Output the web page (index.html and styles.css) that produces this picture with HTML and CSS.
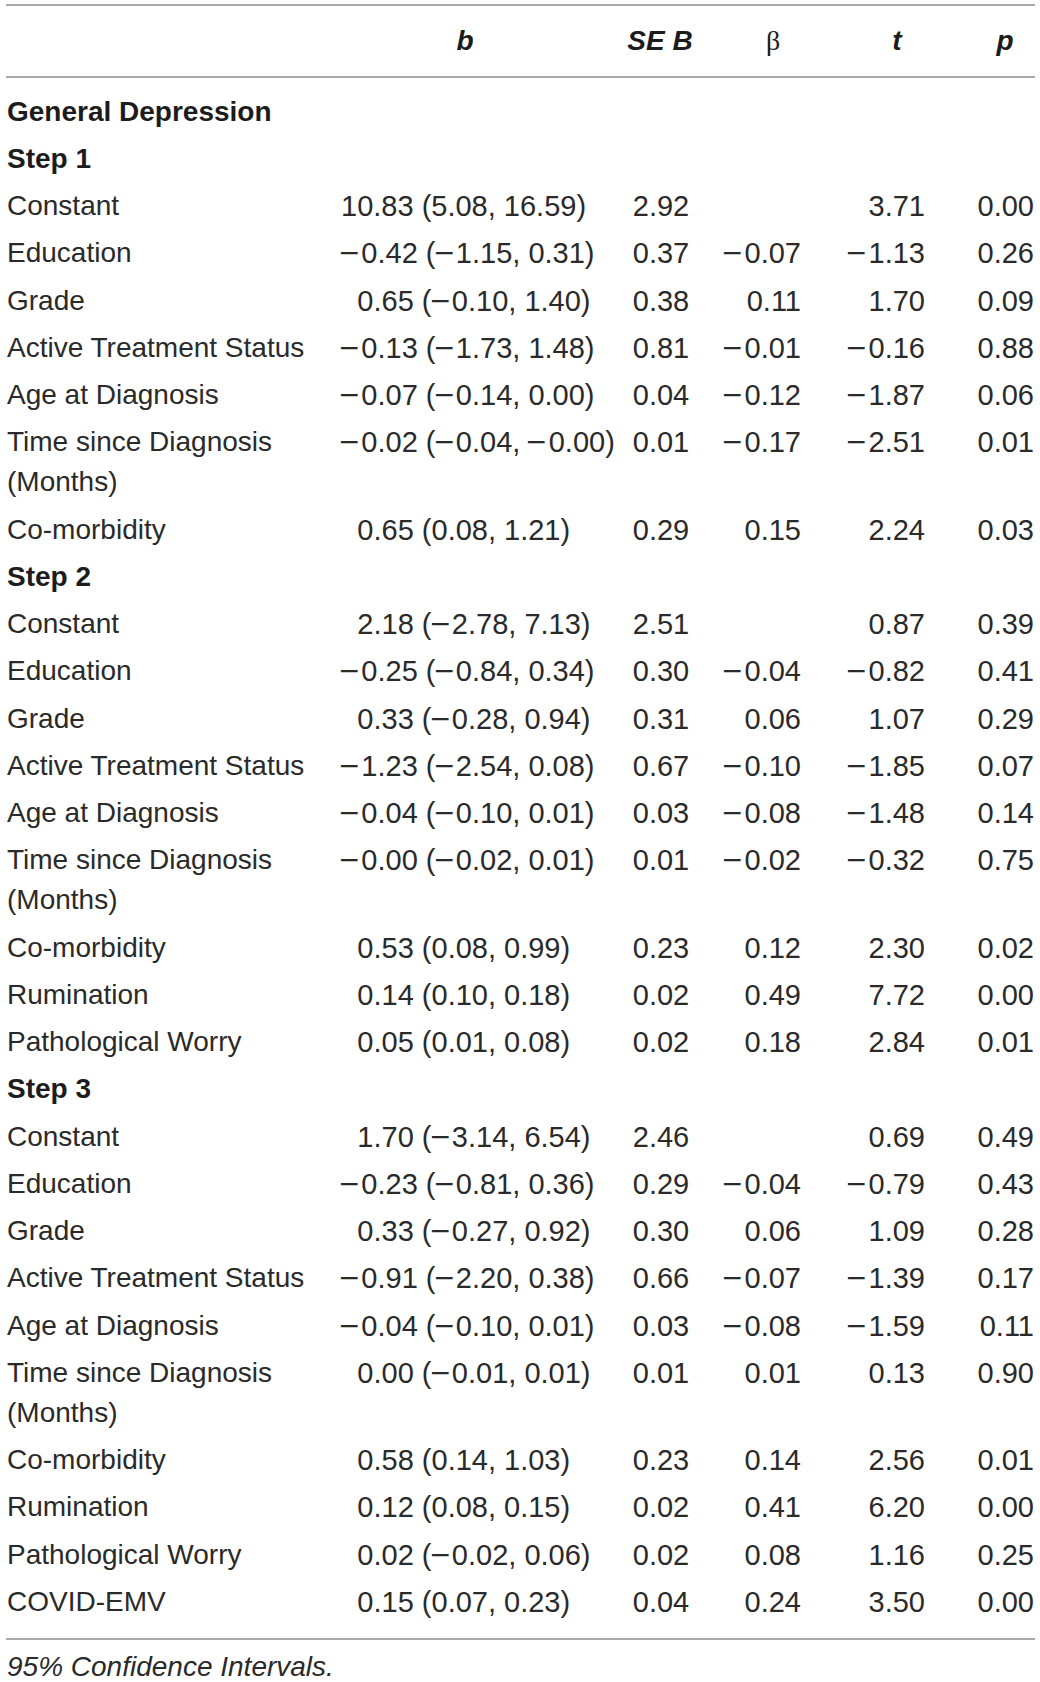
FILE: index.html
```html
<!DOCTYPE html>
<html lang="en">
<head>
<meta charset="utf-8">
<title>Hierarchical regression – General Depression</title>
<link rel="stylesheet" href="styles.css">
</head>
<body>
<div class="wrap">
<table class="reg">
  <colgroup>
    <col class="w-lab"><col class="w-b"><col class="w-se"><col class="w-beta"><col class="w-t"><col class="w-p">
  </colgroup>
  <thead>
    <tr>
      <th class="lab"></th>
      <th class="hb"><i>b</i></th>
      <th class="hse"><i>SE B</i></th>
      <th class="hbeta">β</th>
      <th class="ht"><i>t</i></th>
      <th class="hp"><i>p</i></th>
    </tr>
  </thead>
  <tbody>
    <tr class="first"><td class="sec" colspan="6">General Depression</td></tr>
    <tr><td class="sec" colspan="6">Step 1</td></tr>
    <tr><td class="lab">Constant</td><td class="b">10.83 (5.08, 16.59)</td><td class="se">2.92</td><td class="beta"></td><td class="t">3.71</td><td class="p">0.00</td></tr>
    <tr><td class="lab">Education</td><td class="b"><span class="m">−</span>0.42 (<span class="m">−</span>1.15, 0.31)</td><td class="se">0.37</td><td class="beta"><span class="m">−</span>0.07</td><td class="t"><span class="m">−</span>1.13</td><td class="p">0.26</td></tr>
    <tr><td class="lab">Grade</td><td class="b"><span class="ph">−</span>0.65 (<span class="m">−</span>0.10, 1.40)</td><td class="se">0.38</td><td class="beta">0.11</td><td class="t">1.70</td><td class="p">0.09</td></tr>
    <tr><td class="lab">Active Treatment Status</td><td class="b"><span class="m">−</span>0.13 (<span class="m">−</span>1.73, 1.48)</td><td class="se">0.81</td><td class="beta"><span class="m">−</span>0.01</td><td class="t"><span class="m">−</span>0.16</td><td class="p">0.88</td></tr>
    <tr><td class="lab">Age at Diagnosis</td><td class="b"><span class="m">−</span>0.07 (<span class="m">−</span>0.14, 0.00)</td><td class="se">0.04</td><td class="beta"><span class="m">−</span>0.12</td><td class="t"><span class="m">−</span>1.87</td><td class="p">0.06</td></tr>
    <tr><td class="lab">Time since Diagnosis (Months)</td><td class="b"><span class="m">−</span>0.02 (<span class="m">−</span>0.04, <span class="m">−</span>0.00)</td><td class="se">0.01</td><td class="beta"><span class="m">−</span>0.17</td><td class="t"><span class="m">−</span>2.51</td><td class="p">0.01</td></tr>
    <tr><td class="lab">Co-morbidity</td><td class="b"><span class="ph">−</span>0.65 (0.08, 1.21)</td><td class="se">0.29</td><td class="beta">0.15</td><td class="t">2.24</td><td class="p">0.03</td></tr>
    <tr><td class="sec" colspan="6">Step 2</td></tr>
    <tr><td class="lab">Constant</td><td class="b"><span class="ph">−</span>2.18 (<span class="m">−</span>2.78, 7.13)</td><td class="se">2.51</td><td class="beta"></td><td class="t">0.87</td><td class="p">0.39</td></tr>
    <tr><td class="lab">Education</td><td class="b"><span class="m">−</span>0.25 (<span class="m">−</span>0.84, 0.34)</td><td class="se">0.30</td><td class="beta"><span class="m">−</span>0.04</td><td class="t"><span class="m">−</span>0.82</td><td class="p">0.41</td></tr>
    <tr><td class="lab">Grade</td><td class="b"><span class="ph">−</span>0.33 (<span class="m">−</span>0.28, 0.94)</td><td class="se">0.31</td><td class="beta">0.06</td><td class="t">1.07</td><td class="p">0.29</td></tr>
    <tr><td class="lab">Active Treatment Status</td><td class="b"><span class="m">−</span>1.23 (<span class="m">−</span>2.54, 0.08)</td><td class="se">0.67</td><td class="beta"><span class="m">−</span>0.10</td><td class="t"><span class="m">−</span>1.85</td><td class="p">0.07</td></tr>
    <tr><td class="lab">Age at Diagnosis</td><td class="b"><span class="m">−</span>0.04 (<span class="m">−</span>0.10, 0.01)</td><td class="se">0.03</td><td class="beta"><span class="m">−</span>0.08</td><td class="t"><span class="m">−</span>1.48</td><td class="p">0.14</td></tr>
    <tr><td class="lab">Time since Diagnosis (Months)</td><td class="b"><span class="m">−</span>0.00 (<span class="m">−</span>0.02, 0.01)</td><td class="se">0.01</td><td class="beta"><span class="m">−</span>0.02</td><td class="t"><span class="m">−</span>0.32</td><td class="p">0.75</td></tr>
    <tr><td class="lab">Co-morbidity</td><td class="b"><span class="ph">−</span>0.53 (0.08, 0.99)</td><td class="se">0.23</td><td class="beta">0.12</td><td class="t">2.30</td><td class="p">0.02</td></tr>
    <tr><td class="lab">Rumination</td><td class="b"><span class="ph">−</span>0.14 (0.10, 0.18)</td><td class="se">0.02</td><td class="beta">0.49</td><td class="t">7.72</td><td class="p">0.00</td></tr>
    <tr><td class="lab">Pathological Worry</td><td class="b"><span class="ph">−</span>0.05 (0.01, 0.08)</td><td class="se">0.02</td><td class="beta">0.18</td><td class="t">2.84</td><td class="p">0.01</td></tr>
    <tr><td class="sec" colspan="6">Step 3</td></tr>
    <tr><td class="lab">Constant</td><td class="b"><span class="ph">−</span>1.70 (<span class="m">−</span>3.14, 6.54)</td><td class="se">2.46</td><td class="beta"></td><td class="t">0.69</td><td class="p">0.49</td></tr>
    <tr><td class="lab">Education</td><td class="b"><span class="m">−</span>0.23 (<span class="m">−</span>0.81, 0.36)</td><td class="se">0.29</td><td class="beta"><span class="m">−</span>0.04</td><td class="t"><span class="m">−</span>0.79</td><td class="p">0.43</td></tr>
    <tr><td class="lab">Grade</td><td class="b"><span class="ph">−</span>0.33 (<span class="m">−</span>0.27, 0.92)</td><td class="se">0.30</td><td class="beta">0.06</td><td class="t">1.09</td><td class="p">0.28</td></tr>
    <tr><td class="lab">Active Treatment Status</td><td class="b"><span class="m">−</span>0.91 (<span class="m">−</span>2.20, 0.38)</td><td class="se">0.66</td><td class="beta"><span class="m">−</span>0.07</td><td class="t"><span class="m">−</span>1.39</td><td class="p">0.17</td></tr>
    <tr><td class="lab">Age at Diagnosis</td><td class="b"><span class="m">−</span>0.04 (<span class="m">−</span>0.10, 0.01)</td><td class="se">0.03</td><td class="beta"><span class="m">−</span>0.08</td><td class="t"><span class="m">−</span>1.59</td><td class="p">0.11</td></tr>
    <tr><td class="lab">Time since Diagnosis (Months)</td><td class="b"><span class="ph">−</span>0.00 (<span class="m">−</span>0.01, 0.01)</td><td class="se">0.01</td><td class="beta">0.01</td><td class="t">0.13</td><td class="p">0.90</td></tr>
    <tr><td class="lab">Co-morbidity</td><td class="b"><span class="ph">−</span>0.58 (0.14, 1.03)</td><td class="se">0.23</td><td class="beta">0.14</td><td class="t">2.56</td><td class="p">0.01</td></tr>
    <tr><td class="lab">Rumination</td><td class="b"><span class="ph">−</span>0.12 (0.08, 0.15)</td><td class="se">0.02</td><td class="beta">0.41</td><td class="t">6.20</td><td class="p">0.00</td></tr>
    <tr><td class="lab">Pathological Worry</td><td class="b"><span class="ph">−</span>0.02 (<span class="m">−</span>0.02, 0.06)</td><td class="se">0.02</td><td class="beta">0.08</td><td class="t">1.16</td><td class="p">0.25</td></tr>
    <tr class="last"><td class="lab">COVID-EMV</td><td class="b"><span class="ph">−</span>0.15 (0.07, 0.23)</td><td class="se">0.04</td><td class="beta">0.24</td><td class="t">3.50</td><td class="p">0.00</td></tr>
  </tbody>
</table>
<p class="note">95% Confidence Intervals.</p>
</div>
</body>
</html>
```

FILE: styles.css
```css
html, body {
  margin: 0;
  padding: 0;
  background: #ffffff;
}

.wrap {
  padding: 4px 5px 0 6px;
  font-family: "Liberation Sans", Arial, sans-serif;
  font-size: 28px;
  line-height: 40px;
  color: #2a2a2a;
}

.reg {
  width: 1029px;
  table-layout: fixed;
  border-collapse: separate;
  border-spacing: 0;
}

.w-lab { width: 329px; }
.w-b { width: 285px; }
.w-se { width: 90px; }
.w-beta { width: 126px; }
.w-t { width: 122px; }
.w-p { width: 77px; }

.reg th {
  font-weight: bold;
  color: #1c1c1c;
  padding: 15px 0;
  border-top: 2px solid #a9a9a9;
  border-bottom: 2px solid #a9a9a9;
  text-align: center;
  white-space: nowrap;
}

.reg th i {
  font-style: italic;
}

.reg th.hb { padding-right: 25px; }
.reg th.hse { padding-right: 10px; }
.reg th.hbeta {
  font-family: "Liberation Serif", "Times New Roman", serif;
  font-weight: normal;
}
.reg th.hp { padding-left: 17px; }

.reg td {
  padding: 3.625px 0;
  vertical-align: top;
  white-space: nowrap;
}

.reg td.lab {
  padding-left: 1px;
  white-space: normal;
}

.reg td.sec {
  font-weight: bold;
  color: #1c1c1c;
  padding-left: 1px;
}

.reg td.b,
.reg td.se,
.reg td.beta,
.reg td.t,
.reg td.p {
  font-size: 29px;
}

.reg td.b {
  text-align: left;
  padding-left: 6px;
}

.reg td.se {
  text-align: center;
  padding-right: 8px;
}

.reg td.beta {
  text-align: right;
  padding-right: 35px;
}

.reg td.t {
  text-align: right;
  padding-right: 33px;
}

.reg td.p {
  text-align: right;
  padding-right: 1px;
}

.m {
  display: inline-block;
  margin-right: 3.4px;
  transform: scaleX(1.18);
}

.ph {
  visibility: hidden;
  margin-right: -0.6px;
}

.reg tr.first td {
  padding-top: 13.5px;
}

.reg tr.last td {
  padding-bottom: 16.25px;
  border-bottom: 2px solid #a9a9a9;
}

.note {
  margin: 7px 0 0 0;
  padding-left: 1px;
  font-style: italic;
}
```
